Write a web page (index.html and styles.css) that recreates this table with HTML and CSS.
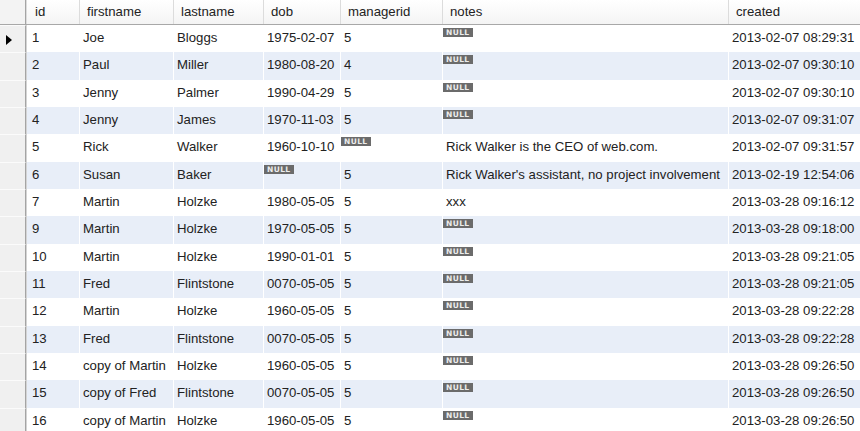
FILE: index.html
```html
<!DOCTYPE html>
<html>
<head>
<meta charset="utf-8">
<link rel="stylesheet" href="styles.css">
</head>
<body>
<div class="grid">
  <div class="row head">
    <div class="ind"></div>
    <div class="c first">id</div>
    <div class="c">firstname</div>
    <div class="c">lastname</div>
    <div class="c">dob</div>
    <div class="c">managerid</div>
    <div class="c">notes</div>
    <div class="c">created</div>
  </div>
  <div class="row">
    <div class="ind"><span class="arrow"></span></div>
    <div class="c first">1</div><div class="c">Joe</div><div class="c">Bloggs</div><div class="c">1975-02-07</div><div class="c">5</div><div class="c"><span class="null">NULL</span></div><div class="c">2013-02-07 08:29:31</div>
  </div>
  <div class="row alt">
    <div class="ind"></div>
    <div class="c first">2</div><div class="c">Paul</div><div class="c">Miller</div><div class="c">1980-08-20</div><div class="c">4</div><div class="c"><span class="null">NULL</span></div><div class="c">2013-02-07 09:30:10</div>
  </div>
  <div class="row">
    <div class="ind"></div>
    <div class="c first">3</div><div class="c">Jenny</div><div class="c">Palmer</div><div class="c">1990-04-29</div><div class="c">5</div><div class="c"><span class="null">NULL</span></div><div class="c">2013-02-07 09:30:10</div>
  </div>
  <div class="row alt">
    <div class="ind"></div>
    <div class="c first">4</div><div class="c">Jenny</div><div class="c">James</div><div class="c">1970-11-03</div><div class="c">5</div><div class="c"><span class="null">NULL</span></div><div class="c">2013-02-07 09:31:07</div>
  </div>
  <div class="row">
    <div class="ind"></div>
    <div class="c first">5</div><div class="c">Rick</div><div class="c">Walker</div><div class="c">1960-10-10</div><div class="c"><span class="null">NULL</span></div><div class="c">Rick Walker is the CEO of web.com.</div><div class="c">2013-02-07 09:31:57</div>
  </div>
  <div class="row alt">
    <div class="ind"></div>
    <div class="c first">6</div><div class="c">Susan</div><div class="c">Baker</div><div class="c"><span class="null">NULL</span></div><div class="c">5</div><div class="c">Rick Walker's assistant, no project involvement</div><div class="c">2013-02-19 12:54:06</div>
  </div>
  <div class="row">
    <div class="ind"></div>
    <div class="c first">7</div><div class="c">Martin</div><div class="c">Holzke</div><div class="c">1980-05-05</div><div class="c">5</div><div class="c">xxx</div><div class="c">2013-03-28 09:16:12</div>
  </div>
  <div class="row alt">
    <div class="ind"></div>
    <div class="c first">9</div><div class="c">Martin</div><div class="c">Holzke</div><div class="c">1970-05-05</div><div class="c">5</div><div class="c"><span class="null">NULL</span></div><div class="c">2013-03-28 09:18:00</div>
  </div>
  <div class="row">
    <div class="ind"></div>
    <div class="c first">10</div><div class="c">Martin</div><div class="c">Holzke</div><div class="c">1990-01-01</div><div class="c">5</div><div class="c"><span class="null">NULL</span></div><div class="c">2013-03-28 09:21:05</div>
  </div>
  <div class="row alt">
    <div class="ind"></div>
    <div class="c first">11</div><div class="c">Fred</div><div class="c">Flintstone</div><div class="c">0070-05-05</div><div class="c">5</div><div class="c"><span class="null">NULL</span></div><div class="c">2013-03-28 09:21:05</div>
  </div>
  <div class="row">
    <div class="ind"></div>
    <div class="c first">12</div><div class="c">Martin</div><div class="c">Holzke</div><div class="c">1960-05-05</div><div class="c">5</div><div class="c"><span class="null">NULL</span></div><div class="c">2013-03-28 09:22:28</div>
  </div>
  <div class="row alt">
    <div class="ind"></div>
    <div class="c first">13</div><div class="c">Fred</div><div class="c">Flintstone</div><div class="c">0070-05-05</div><div class="c">5</div><div class="c"><span class="null">NULL</span></div><div class="c">2013-03-28 09:22:28</div>
  </div>
  <div class="row">
    <div class="ind"></div>
    <div class="c first">14</div><div class="c">copy of Martin</div><div class="c">Holzke</div><div class="c">1960-05-05</div><div class="c">5</div><div class="c"><span class="null">NULL</span></div><div class="c">2013-03-28 09:26:50</div>
  </div>
  <div class="row alt">
    <div class="ind"></div>
    <div class="c first">15</div><div class="c">copy of Fred</div><div class="c">Flintstone</div><div class="c">0070-05-05</div><div class="c">5</div><div class="c"><span class="null">NULL</span></div><div class="c">2013-03-28 09:26:50</div>
  </div>
  <div class="row">
    <div class="ind"></div>
    <div class="c first">16</div><div class="c">copy of Martin</div><div class="c">Holzke</div><div class="c">1960-05-05</div><div class="c">5</div><div class="c"><span class="null">NULL</span></div><div class="c">2013-03-28 09:26:50</div>
  </div>
</div>
</body>
</html>
```
FILE: styles.css
```css
html, body {
  margin: 0;
  padding: 0;
  background: #ffffff;
  overflow: hidden;
}
body {
  font-family: "Liberation Sans", Arial, sans-serif;
  font-size: 13.2px;
  color: #222222;
}
.grid {
  display: flex;
  flex-direction: column;
  width: 860px;
}
.row {
  display: grid;
  grid-template-columns: 26px 53px 94px 90px 77px 102px 286px 1fr;
  height: 27.34px;
  background: #ffffff;
}
.row.alt {
  background: #e8eef8;
}
.row.head {
  height: 24px;
  background: linear-gradient(#ffffff, #f4f4f4);
  border-bottom: 1px solid #a8a8a8;
}
.ind {
  background: #f0f0f0;
  border-right: 1px solid #a4a4a4;
  border-top: 1px solid #fbfbfb;
  display: flex;
  align-items: center;
  padding-left: 6px;
}
.head .ind {
  border-top: none;
  background: #f3f3f3;
}
.c {
  border-left: 1px solid #ffffff;
  padding: 0 0 2px 3px;
  display: flex;
  align-items: center;
  white-space: nowrap;
  overflow: hidden;
  line-height: 1;
}
.c.first {
  border-left: 1px solid #d4d4d4;
  padding-left: 5px;
}
.head .c {
  border-left: 1px solid #dcdcdc;
  padding-left: 7px;
  padding-bottom: 1px;
}
.head .c.first {
  padding-left: 8px;
}
.arrow {
  width: 0;
  height: 0;
  border-top: 5px solid transparent;
  border-bottom: 5px solid transparent;
  border-left: 6px solid #000000;
  margin-top: 2px;
}
.c:has(.null) {
  align-items: flex-start;
  padding: 3px 0 0 0;
}
.null {
  display: inline-block;
  background: #6b6b6b;
  color: #ececec;
  font-family: "DejaVu Sans", sans-serif;
  font-weight: bold;
  font-size: 7.5px;
  line-height: 9px;
  height: 9px;
  padding: 0 3px;
  letter-spacing: 0.4px;
}
```
